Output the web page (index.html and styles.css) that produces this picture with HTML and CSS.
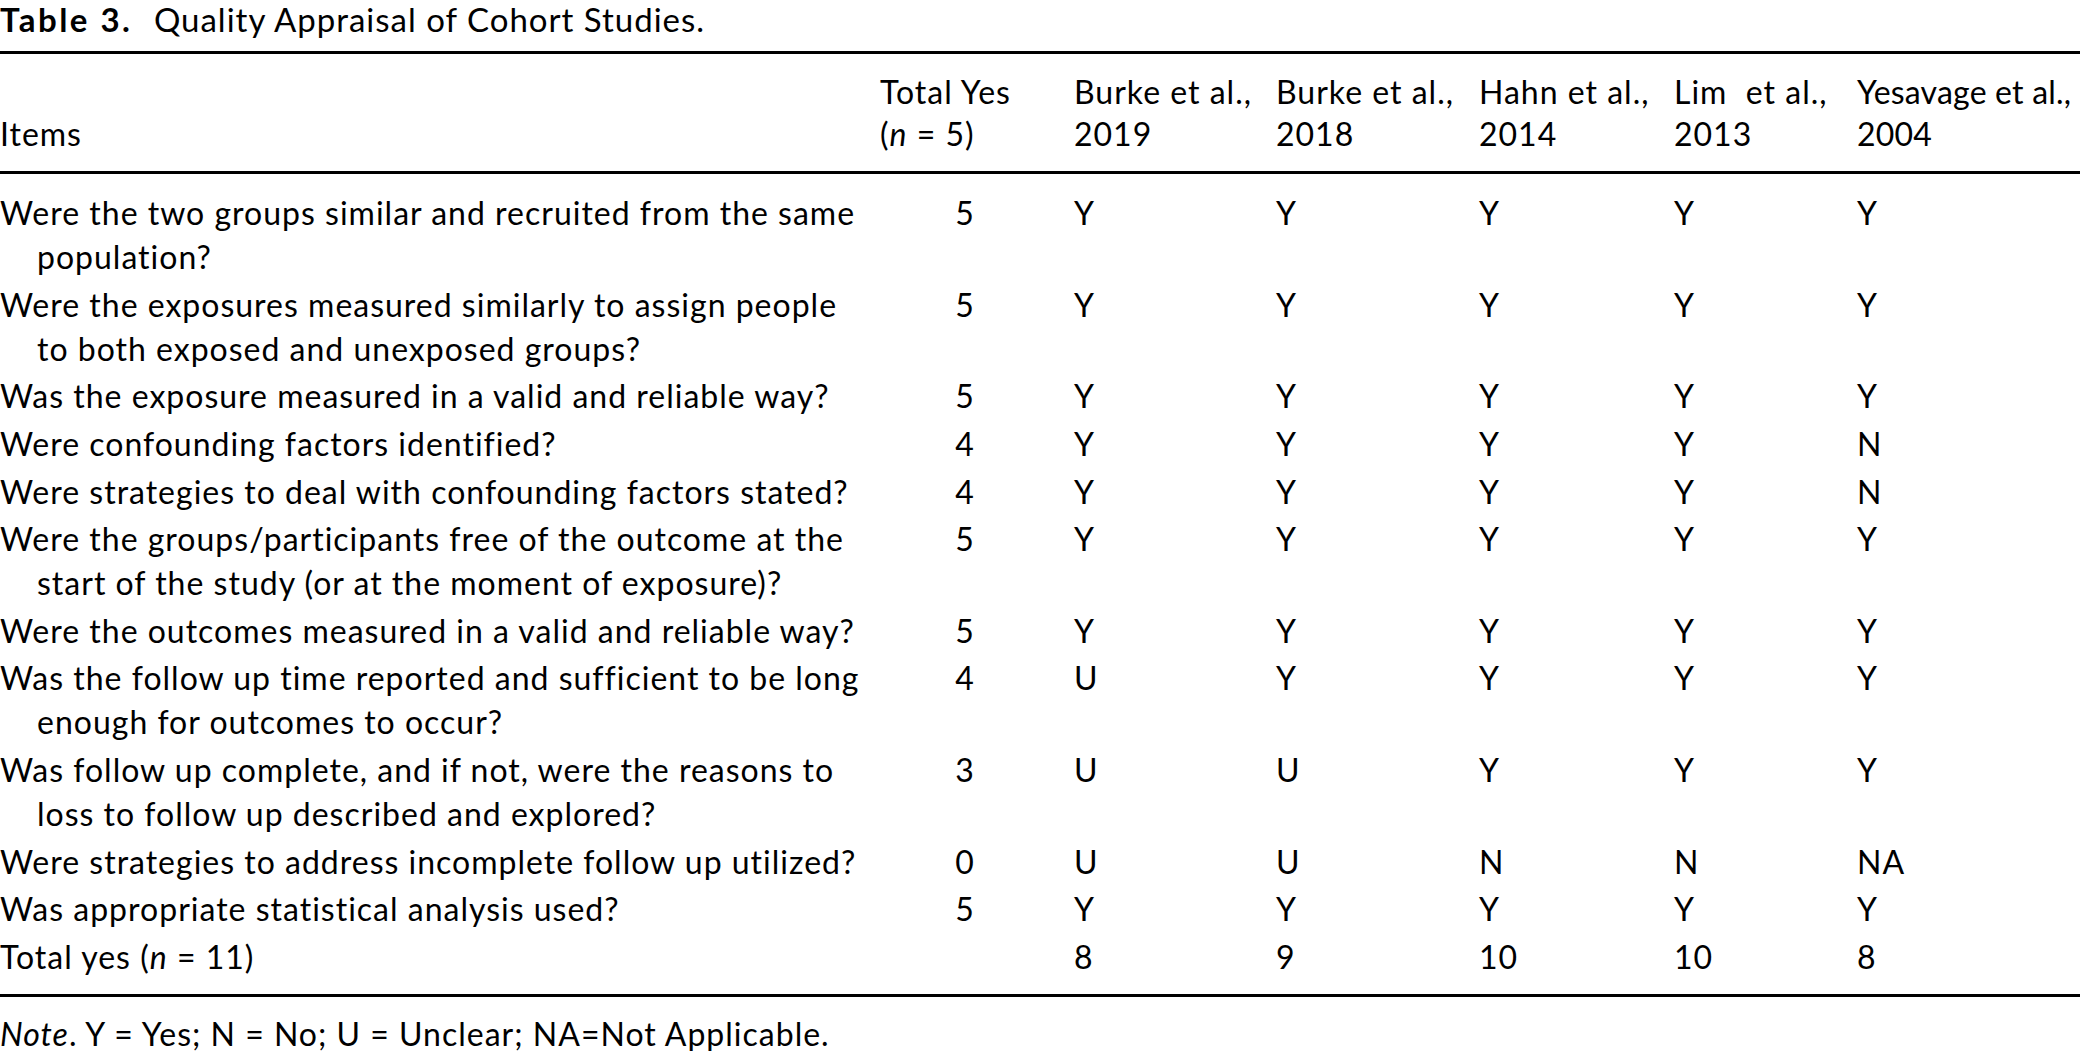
FILE: index.html
```html
<!DOCTYPE html>
<html lang="en">
<head>
<meta charset="utf-8">
<title>Table 3. Quality Appraisal of Cohort Studies.</title>
<link rel="stylesheet" href="styles.css">
</head>
<body>
<div class="page">
  <p class="caption"><span class="label">Table 3.</span> Quality Appraisal of Cohort Studies.</p>
  <table class="appraisal">
    <colgroup>
      <col class="c-items">
      <col class="c-total">
      <col class="c-b19">
      <col class="c-b18">
      <col class="c-hahn">
      <col class="c-lim">
      <col class="c-yes">
    </colgroup>
    <thead>
      <tr>
        <th>Items</th>
        <th>Total Yes<br>(<i>n</i> = 5)</th>
        <th>Burke et al.,<br>2019</th>
        <th>Burke et al.,<br>2018</th>
        <th>Hahn et al.,<br>2014</th>
        <th>Lim&nbsp; et al.,<br>2013</th>
        <th class="tight">Yesavage et al.,<br>2004</th>
      </tr>
    </thead>
    <tbody>
      <tr><td class="item">Were the two groups similar and recruited from the same population?</td><td class="num">5</td><td>Y</td><td>Y</td><td>Y</td><td>Y</td><td>Y</td></tr>
      <tr><td class="item">Were the exposures measured similarly to assign people to both exposed and unexposed groups?</td><td class="num">5</td><td>Y</td><td>Y</td><td>Y</td><td>Y</td><td>Y</td></tr>
      <tr><td class="item">Was the exposure measured in a valid and reliable way?</td><td class="num">5</td><td>Y</td><td>Y</td><td>Y</td><td>Y</td><td>Y</td></tr>
      <tr><td class="item">Were confounding factors identified?</td><td class="num">4</td><td>Y</td><td>Y</td><td>Y</td><td>Y</td><td>N</td></tr>
      <tr><td class="item">Were strategies to deal with confounding factors stated?</td><td class="num">4</td><td>Y</td><td>Y</td><td>Y</td><td>Y</td><td>N</td></tr>
      <tr><td class="item">Were the groups/participants free of the outcome at the start of the study (or at the moment of exposure)?</td><td class="num">5</td><td>Y</td><td>Y</td><td>Y</td><td>Y</td><td>Y</td></tr>
      <tr><td class="item">Were the outcomes measured in a valid and reliable way?</td><td class="num">5</td><td>Y</td><td>Y</td><td>Y</td><td>Y</td><td>Y</td></tr>
      <tr><td class="item">Was the follow up time reported and sufficient to be long enough for outcomes to occur?</td><td class="num">4</td><td>U</td><td>Y</td><td>Y</td><td>Y</td><td>Y</td></tr>
      <tr><td class="item">Was follow up complete, and if not, were the reasons to loss to follow up described and explored?</td><td class="num">3</td><td>U</td><td>U</td><td>Y</td><td>Y</td><td>Y</td></tr>
      <tr><td class="item">Were strategies to address incomplete follow up utilized?</td><td class="num">0</td><td>U</td><td>U</td><td>N</td><td>N</td><td>NA</td></tr>
      <tr><td class="item">Was appropriate statistical analysis used?</td><td class="num">5</td><td>Y</td><td>Y</td><td>Y</td><td>Y</td><td>Y</td></tr>
      <tr><td class="item">Total yes (<i>n</i> = 11)</td><td class="num"></td><td>8</td><td>9</td><td>10</td><td>10</td><td>8</td></tr>
    </tbody>
  </table>
  <p class="note"><i>Note</i>. Y = Yes; N = No; U = Unclear; NA=Not Applicable.</p>
</div>
</body>
</html>
```

FILE: styles.css
```css
html, body {
  margin: 0;
  padding: 0;
  background: #ffffff;
}

.page {
  width: 2080px;
  overflow: hidden;
  font-family: "Lato", "Open Sans", sans-serif;
  font-size: 32px;
  letter-spacing: 1px;
  color: #000000;
}

.caption {
  margin: 0;
  height: 39px;
  line-height: 39px;
  font-size: 33px;
  white-space: nowrap;
}

.caption .label {
  font-weight: 700;
  letter-spacing: 2.5px;
  margin-right: 12px;
}

.appraisal {
  margin-top: 12px;
  width: 2080px;
  table-layout: fixed;
  border-collapse: collapse;
  border-top: 3px solid #000;
  border-bottom: 3px solid #000;
}

.c-items { width: 880px; }
.c-total { width: 194px; }
.c-b19 { width: 202px; }
.c-b18 { width: 203px; }
.c-hahn { width: 195px; }
.c-lim { width: 183px; }
.c-yes { width: 223px; }

.appraisal th,
.appraisal td {
  padding: 2px 0 1.65px;
  font-weight: 400;
  text-align: left;
  line-height: 44px;
  vertical-align: top;
  white-space: nowrap;
}

.appraisal thead th {
  vertical-align: bottom;
  line-height: 42px;
  padding-top: 17px;
  padding-bottom: 16px;
  border-bottom: 3px solid #000;
}

.appraisal thead th.tight {
  letter-spacing: 0.2px;
}

.appraisal td.item {
  white-space: normal;
  padding-left: 37px;
  padding-right: 12px;
  text-indent: -37px;
}

.appraisal td.num {
  text-align: center;
  padding-right: 24px;
}

.appraisal tbody tr:first-child td {
  padding-top: 17px;
}

.appraisal tbody tr:last-child td {
  padding-bottom: 14.5px;
}

.note {
  margin: 19px 0 0;
  line-height: 36px;
  white-space: nowrap;
}
```
